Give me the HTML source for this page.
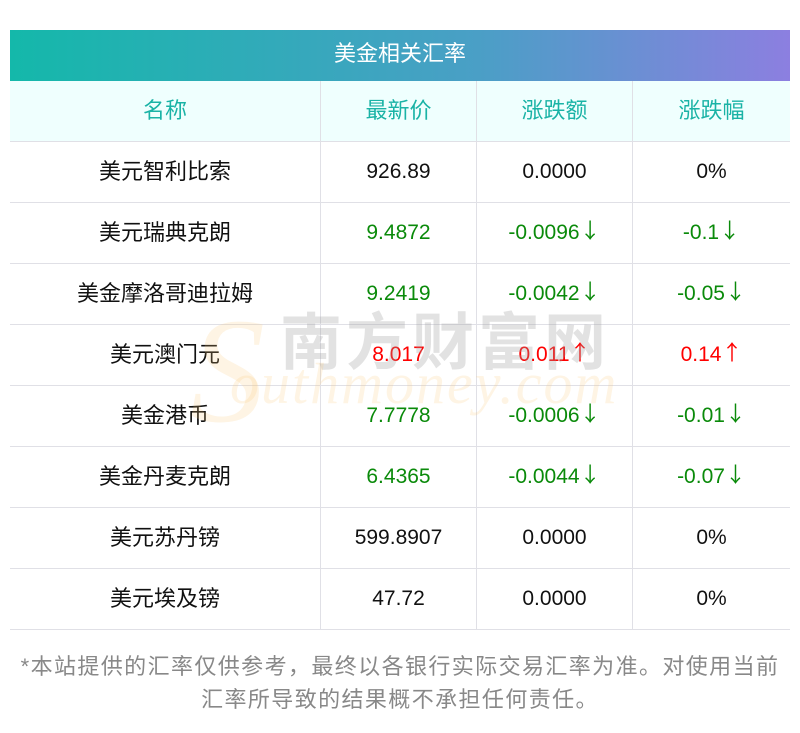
<!DOCTYPE html>
<html><head><meta charset="utf-8"><style>
body{margin:0;width:800px;height:733px;background:#fff;font-family:"Liberation Sans","Noto Sans CJK SC",sans-serif;position:relative;overflow:hidden}
.title{position:absolute;left:10px;top:30px;width:780px;height:51px;background:linear-gradient(90deg,#14b8aa,#4a9fc6 60%,#8c7fe0);color:#fff;font-size:22px;line-height:51px;text-align:center}
.title span{position:relative;top:-2px}
table{position:absolute;left:10px;top:81px;width:780px;border-collapse:collapse;font-size:21px}
td{height:60px;border-bottom:1px solid #e0e0e6;border-left:1px solid #e0e0e6;text-align:center;padding:0;color:#111;line-height:24px}
td:first-child{border-left:none;width:310px;font-size:22px}
td:nth-child(2),td:nth-child(3){width:155px}
tr.h td{background:#effffe;color:#1ab3a6;font-size:22px}
.g{color:#0a8a0a}.r{color:#f00}
.a{font-family:"Noto Sans CJK SC",sans-serif;font-size:21px;line-height:0;position:relative;top:-1px}
.note{position:absolute;left:0;top:650px;width:800px;text-align:center;color:#888;font-size:22px;line-height:33px;letter-spacing:1.4px}
.wm1{position:absolute;left:280px;top:292px;font-size:62px;font-weight:bold;color:rgba(160,160,160,.3);letter-spacing:4px;z-index:2}
.wm2{position:absolute;left:230px;top:350px;font-size:58px;font-style:italic;font-family:"Liberation Serif",serif;color:rgba(250,200,120,.2);z-index:2;letter-spacing:2px}
.wm3{position:absolute;left:190px;top:285px;font-size:150px;font-style:italic;font-family:"Liberation Serif",serif;color:rgba(250,200,120,.2);z-index:2}
</style></head><body>
<div class="title"><span>美金相关汇率</span></div>
<table>
<tr class="h"><td>名称</td><td>最新价</td><td>涨跌额</td><td>涨跌幅</td></tr>
<tr><td>美元智利比索</td><td>926.89</td><td>0.0000</td><td>0%</td></tr>
<tr><td>美元瑞典克朗</td><td class="g">9.4872</td><td class="g">-0.0096<span class="a">↓</span></td><td class="g">-0.1<span class="a">↓</span></td></tr>
<tr><td>美金摩洛哥迪拉姆</td><td class="g">9.2419</td><td class="g">-0.0042<span class="a">↓</span></td><td class="g">-0.05<span class="a">↓</span></td></tr>
<tr><td>美元澳门元</td><td class="r">8.017</td><td class="r">0.011<span class="a">↑</span></td><td class="r">0.14<span class="a">↑</span></td></tr>
<tr><td>美金港币</td><td class="g">7.7778</td><td class="g">-0.0006<span class="a">↓</span></td><td class="g">-0.01<span class="a">↓</span></td></tr>
<tr><td>美金丹麦克朗</td><td class="g">6.4365</td><td class="g">-0.0044<span class="a">↓</span></td><td class="g">-0.07<span class="a">↓</span></td></tr>
<tr><td>美元苏丹镑</td><td>599.8907</td><td>0.0000</td><td>0%</td></tr>
<tr><td>美元埃及镑</td><td>47.72</td><td>0.0000</td><td>0%</td></tr>
</table>
<div class="wm3">S</div>
<div class="wm1">南方财富网</div>
<div class="wm2">outhmoney.com</div>
<div class="note">*本站提供的汇率仅供参考，最终以各银行实际交易汇率为准。对使用当前<br>汇率所导致的结果概不承担任何责任。</div>
</body></html>
